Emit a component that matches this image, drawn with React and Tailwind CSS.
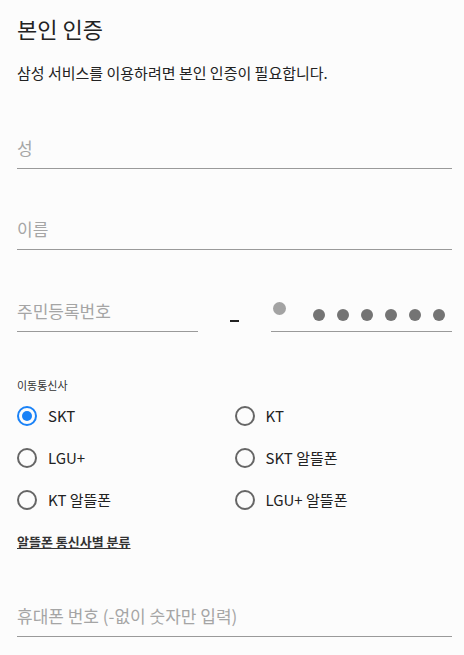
import { useState } from "react";

const carriers = ["SKT", "KT", "LGU+", "SKT 알뜰폰", "KT 알뜰폰", "LGU+ 알뜰폰"];

function Field({ placeholder, className = "" }) {
  return (
    <div className={`flex h-[40px] items-end border-b border-[#9a9a9a] pb-[8px] ${className}`}>
      <span className="text-[17px] leading-[24px] text-[#a5a5a5]">{placeholder}</span>
    </div>
  );
}

function Radio({ label, checked, onClick }) {
  return (
    <button type="button" onClick={onClick} className="flex h-[42px] items-center gap-[11px] text-left">
      <span
        className={`flex h-[20px] w-[20px] items-center justify-center rounded-full border-2 ${
          checked ? "border-[#1a82f7]" : "border-[#666]"
        }`}
      >
        {checked && <span className="h-[10px] w-[10px] rounded-full bg-[#1a82f7]" />}
      </span>
      <span className="text-[15px] leading-[20px] text-[#222]">{label}</span>
    </button>
  );
}

export default function App() {
  const [carrier, setCarrier] = useState("SKT");

  return (
    <div
      className="min-h-[655px] bg-[#fcfcfc] pl-[17px] pr-[12px] pt-[14px]"
      style={{ fontFamily: '"Noto Sans CJK KR", "Noto Sans", sans-serif' }}
    >
      <h1 className="text-[22px] font-normal leading-[28px] text-[#222]">본인 인증</h1>
      <p className="mt-[21px] text-[15px] leading-[20px] text-[#222]">삼성 서비스를 이용하려면 본인 인증이 필요합니다.</p>

      <Field placeholder="성" className="mt-[46px]" />
      <Field placeholder="이름" className="mt-[41px]" />

      <div className="mt-[42px] grid grid-cols-[181px_1fr_181px] items-start">
        <Field placeholder="주민등록번호" />
        <div className="flex justify-center pt-[28px]">
          <span className="h-[2px] w-[9px] bg-[#222]" />
        </div>
        <div className="flex h-[40px] items-start border-b border-[#9a9a9a] pl-[2px] pr-[7px]">
          <span className="mt-[10px] h-[13px] w-[13px] rounded-full bg-[#a3a3a3]" />
          <div className="ml-auto mt-[17px] flex gap-[12px]">
            {[0, 1, 2, 3, 4, 5].map((i) => (
              <span key={i} className="h-[12px] w-[12px] rounded-full bg-[#747474]" />
            ))}
          </div>
        </div>
      </div>

      <p className="mt-[45px] text-[11px] leading-[16px] text-[#333]">이동통신사</p>
      <div className="mt-[2px] grid grid-cols-2">
        {carriers.map((c) => (
          <Radio key={c} label={c} checked={carrier === c} onClick={() => setCarrier(c)} />
        ))}
      </div>

      <a href="#" className="mt-[12px] block w-fit text-[13px] font-bold leading-[18px] text-[#333] underline">
        알뜰폰 통신사별 분류
      </a>

      <Field placeholder="휴대폰 번호 (-없이 숫자만 입력)" className="mt-[46px]" />
    </div>
  );
}
